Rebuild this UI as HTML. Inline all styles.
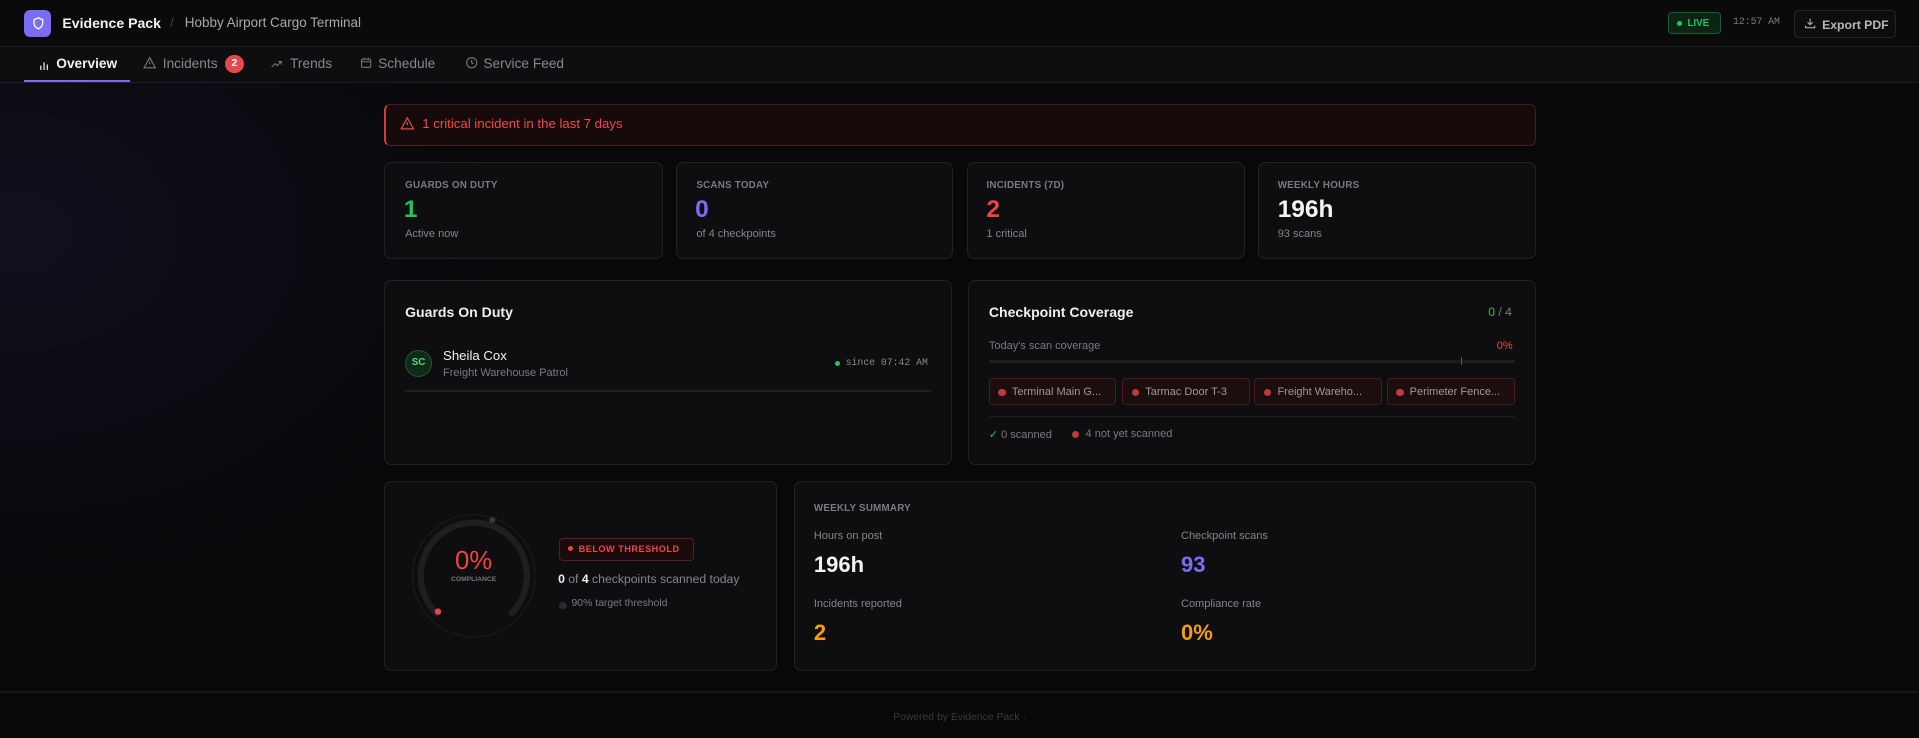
<!DOCTYPE html>
<html><head><meta charset="utf-8"><style>
html{zoom:1.22385}
*{box-sizing:border-box;margin:0;padding:0}
body{width:1568px;height:603px;overflow:hidden;background:#08080a;font-family:"Liberation Sans",sans-serif;color:#e8e8ea;position:relative}
.bgglow{position:absolute;left:-200px;top:40px;width:700px;height:500px;background:radial-gradient(ellipse at 30% 30%,rgba(60,50,120,0.18),transparent 60%)}
.a{position:absolute}
.hdr{left:0;top:0;width:1568px;height:38px;background:#0a0a0b;border-bottom:1px solid #1c1c1f}
.nav{left:0;top:38px;width:1568px;height:30px;background:#0e0e10;border-bottom:1px solid #1f1f22}
.card{position:absolute;background:#0e0e10;border:1px solid #222226;border-radius:6px}
.lbl{font-size:8px;font-weight:bold;color:#7a7a80;letter-spacing:.2px}
.sub{font-size:9px;color:#85858b}
.tab{position:absolute;top:46px;font-size:11.2px;color:#86868c}
.mono{font-family:"Liberation Mono",monospace}
.chip{position:absolute;top:309px;height:22px;width:104px;background:#1c0d0e;border:1px solid #4a1c1e;border-radius:3px;font-size:9px;color:#9a9a9f;padding:6px 0 0 18px;white-space:nowrap}
.chip:before{content:"";position:absolute;left:7px;top:8px;width:6px;height:6px;border-radius:50%;background:#c03a3a}
</style></head><body>
<div class="bgglow"></div>
<div class="a hdr"></div>
<div class="a" style="left:20px;top:8px;width:22px;height:22px;background:#7b6cf2;border-radius:5px"></div>
<svg class="a" style="left:25px;top:13px" width="12" height="12" viewBox="0 0 24 24" fill="none" stroke="#fff" stroke-width="2.2"><path d="M12 3l7 3v6c0 4-3 7-7 9-4-2-7-5-7-9V6z"/></svg>
<div class="a" style="left:51px;top:12px;font-size:11.5px;font-weight:bold;color:#f2f2f4">Evidence Pack</div>
<div class="a" style="left:139px;top:12px;font-size:11px;color:#444">/</div>
<div class="a" style="left:151px;top:12px;font-size:11px;color:#a8a8ae">Hobby Airport Cargo Terminal</div>
<div class="a" style="left:1363px;top:10px;width:43px;height:18px;background:#0b2414;border:1px solid #1a5a30;border-radius:3px;font-size:8px;font-weight:bold;color:#22c55e;padding:4px 0 0 15px">LIVE</div>
<div class="a" style="left:1370px;top:17px;width:4px;height:4px;border-radius:50%;background:#22c55e"></div>
<div class="a mono" style="left:1416px;top:13px;font-size:8px;color:#7a7a80">12:57 AM</div>
<div class="a" style="left:1466px;top:8px;width:83px;height:23px;border:1px solid #26262a;border-radius:4px;background:#0d0d0f;font-size:10px;font-weight:bold;color:#b8b8bc;padding:6px 0 0 22px">Export PDF</div>
<svg class="a" style="left:1474px;top:14px" width="10" height="10" viewBox="0 0 24 24" fill="none" stroke="#aaa" stroke-width="2.2"><path d="M12 3v12M7 10l5 5 5-5M3 17v4h18v-4"/></svg>

<div class="a nav"></div>
<div class="a" style="left:20px;top:65px;width:86px;height:2px;background:#7b6cf2"></div>
<svg class="a" style="left:32px;top:48px" width="9" height="9" viewBox="0 0 10 10" fill="#ddd"><rect x="1" y="6" width="1.2" height="4"/><rect x="4" y="3" width="1.2" height="7"/><rect x="7" y="5" width="1.2" height="5"/></svg>
<div class="tab" style="left:46px;color:#f2f2f4;font-weight:bold">Overview</div>
<svg class="a" style="left:117px;top:46px" width="11" height="11" viewBox="0 0 24 24" fill="none" stroke="#777" stroke-width="2"><path d="M12 3L2 21h20zM12 10v5M12 18v.5"/></svg>
<div class="tab" style="left:133px">Incidents</div>
<div class="a" style="left:184px;top:45px;width:15px;height:15px;border-radius:50%;background:#e5484d;font-size:8.5px;font-weight:bold;color:#fff;text-align:center;line-height:15px">2</div>
<svg class="a" style="left:221px;top:47px" width="11" height="10" viewBox="0 0 24 24" fill="none" stroke="#777" stroke-width="2"><path d="M2 18l7-7 4 4 8-8M15 7h6v6"/></svg>
<div class="tab" style="left:237px">Trends</div>
<svg class="a" style="left:294px;top:46px" width="10" height="11" viewBox="0 0 24 24" fill="none" stroke="#777" stroke-width="2"><rect x="3" y="5" width="18" height="16" rx="2"/><path d="M3 10h18M8 2v5M16 2v5"/></svg>
<div class="tab" style="left:309px">Schedule</div>
<svg class="a" style="left:380px;top:46px" width="11" height="11" viewBox="0 0 24 24" fill="none" stroke="#777" stroke-width="2"><circle cx="12" cy="12" r="9"/><path d="M12 7v5l3 2"/></svg>
<div class="tab" style="left:395px">Service Feed</div>

<div class="a" style="left:314px;top:85px;width:941px;height:34px;background:#170a0b;border:1px solid #4e1a1c;border-left:2px solid #d13b3b;border-radius:5px"></div>
<svg class="a" style="left:327px;top:95px" width="12" height="12" viewBox="0 0 24 24" fill="none" stroke="#e5484d" stroke-width="2"><path d="M12 3L2 21h20zM12 10v5M12 18v.5"/></svg>
<div class="a" style="left:345px;top:95px;font-size:10.8px;color:#ef4b4b">1 critical incident in the last 7 days</div>

<div class="card" style="left:314px;top:132px;width:228px;height:80px"></div>
<div class="card" style="left:552px;top:132px;width:227px;height:80px"></div>
<div class="card" style="left:790px;top:132px;width:227px;height:80px"></div>
<div class="card" style="left:1028px;top:132px;width:227px;height:80px"></div>
<div class="a lbl" style="left:331px;top:147px">GUARDS ON DUTY</div>
<div class="a lbl" style="left:569px;top:147px">SCANS TODAY</div>
<div class="a lbl" style="left:806px;top:147px">INCIDENTS (7D)</div>
<div class="a lbl" style="left:1044px;top:147px">WEEKLY HOURS</div>
<div class="a" style="left:330px;top:160px;font-size:20px;font-weight:bold;color:#22c55e">1</div>
<div class="a" style="left:568px;top:160px;font-size:20px;font-weight:bold;color:#7b6cf2">0</div>
<div class="a" style="left:806px;top:160px;font-size:20px;font-weight:bold;color:#ef4444">2</div>
<div class="a" style="left:1044px;top:160px;font-size:20px;font-weight:bold;color:#f4f4f6">196h</div>
<div class="a sub" style="left:331px;top:186px">Active now</div>
<div class="a sub" style="left:569px;top:186px">of 4 checkpoints</div>
<div class="a sub" style="left:806px;top:186px">1 critical</div>
<div class="a sub" style="left:1044px;top:186px">93 scans</div>

<div class="card" style="left:314px;top:229px;width:464px;height:151px"></div>
<div class="a" style="left:331px;top:248px;font-size:11.5px;font-weight:bold;color:#f0f0f2">Guards On Duty</div>
<div class="a" style="left:331px;top:286px;width:22px;height:22px;border-radius:50%;background:#0f2a18;border:1px solid #1f5a33;color:#4ade80;font-size:8px;font-weight:bold;text-align:center;line-height:20px">SC</div>
<div class="a" style="left:362px;top:284px;font-size:10.8px;color:#f0f0f2">Sheila Cox</div>
<div class="a" style="left:362px;top:300px;font-size:9px;color:#7a7a80">Freight Warehouse Patrol</div>
<div class="a" style="left:682px;top:295px;width:4px;height:4px;border-radius:50%;background:#22c55e"></div>
<div class="a mono" style="left:691px;top:292px;font-size:8px;color:#888">since 07:42 AM</div>
<div class="a" style="left:331px;top:319px;width:430px;height:1px;background:#1f1f22"></div>

<div class="card" style="left:791px;top:229px;width:464px;height:151px"></div>
<div class="a" style="left:808px;top:248px;font-size:11.5px;font-weight:bold;color:#f0f0f2">Checkpoint Coverage</div>
<div class="a" style="left:1216px;top:249px;font-size:10px;color:#777"><b style="color:#22c55e;font-weight:normal">0</b> / 4</div>
<div class="a" style="left:808px;top:278px;font-size:9px;color:#7a7a80">Today's scan coverage</div>
<div class="a" style="left:1223px;top:278px;font-size:9px;color:#ef4444">0%</div>
<div class="a" style="left:808px;top:294px;width:430px;height:3px;background:#1e1e21;border-radius:2px"></div>
<div class="a" style="left:1194px;top:292px;width:1px;height:6px;background:#555"></div>
<div class="chip" style="left:808px">Terminal Main G...</div>
<div class="chip" style="left:917px">Tarmac Door T-3</div>
<div class="chip" style="left:1025px">Freight Wareho...</div>
<div class="chip" style="left:1133px;width:105px">Perimeter Fence...</div>
<div class="a" style="left:808px;top:340px;width:430px;height:1px;background:#1f1f22"></div>
<div class="a" style="left:808px;top:350px;font-size:9px;color:#7a7a80"><span style="color:#22c55e">✓</span> 0 scanned</div>
<div class="a" style="left:876px;top:352px;width:6px;height:6px;border-radius:50%;background:#c03a3a"></div>
<div class="a" style="left:887px;top:350px;font-size:9px;color:#7a7a80">4 not yet scanned</div>

<div class="card" style="left:314px;top:393px;width:321px;height:155px"></div>
<svg class="a" style="left:337px;top:420px" width="101" height="101" viewBox="0 0 100 100">
<circle cx="50" cy="50" r="49.5" fill="none" stroke="#1a1a1d" stroke-width="1"/>
<path d="M19.6 80.4 A43 43 0 1 1 80.4 80.4" fill="none" stroke="#1f1f22" stroke-width="5" stroke-linecap="round"/>
<circle cx="21" cy="79" r="2.6" fill="#ef4444"/>
<circle cx="65" cy="5" r="2.4" fill="#3a3a3e"/>
</svg>
<div class="a" style="left:337px;top:447px;width:100px;text-align:center;font-size:21px;color:#ef4444">0%</div>
<div class="a" style="left:337px;top:471px;width:100px;text-align:center;font-size:5.5px;font-weight:bold;color:#77777c">COMPLIANCE</div>
<div class="a" style="left:457px;top:440px;width:110px;height:18px;background:#1c0b0c;border:1px solid #5a1e20;border-radius:3px;font-size:7.5px;font-weight:bold;color:#ef4444;padding:4px 0 0 15px;letter-spacing:.4px">BELOW THRESHOLD</div>
<div class="a" style="left:464px;top:446px;width:4px;height:4px;border-radius:50%;background:#ef4444"></div>
<div class="a" style="left:456px;top:467px;font-size:10px;color:#85858b"><b style="color:#f0f0f2">0</b> of <b style="color:#f0f0f2">4</b> checkpoints scanned today</div>
<div class="a" style="left:457px;top:492px;width:6px;height:6px;border-radius:50%;background:#2a2a2e"></div>
<div class="a" style="left:467px;top:489px;font-size:8.5px;color:#7a7a80">90% target threshold</div>

<div class="card" style="left:649px;top:393px;width:606px;height:155px"></div>
<div class="a lbl" style="left:665px;top:411px">WEEKLY SUMMARY</div>
<div class="a" style="left:665px;top:433px;font-size:9px;color:#85858b">Hours on post</div>
<div class="a" style="left:665px;top:451px;font-size:18px;font-weight:bold;color:#f4f4f6">196h</div>
<div class="a" style="left:965px;top:433px;font-size:9px;color:#85858b">Checkpoint scans</div>
<div class="a" style="left:965px;top:451px;font-size:18px;font-weight:bold;color:#7b6cf2">93</div>
<div class="a" style="left:665px;top:489px;font-size:9px;color:#85858b">Incidents reported</div>
<div class="a" style="left:665px;top:507px;font-size:18px;font-weight:bold;color:#f59e0b">2</div>
<div class="a" style="left:965px;top:489px;font-size:9px;color:#85858b">Compliance rate</div>
<div class="a" style="left:965px;top:507px;font-size:18px;font-weight:bold;color:#f59e0b">0%</div>

<div class="a" style="left:0;top:565px;width:1568px;height:1px;background:#17171a"></div>
<div class="a" style="left:0;top:582px;width:1568px;text-align:center;font-size:8.5px;color:#3a3a3e">Powered by Evidence Pack ·</div>
</body></html>
